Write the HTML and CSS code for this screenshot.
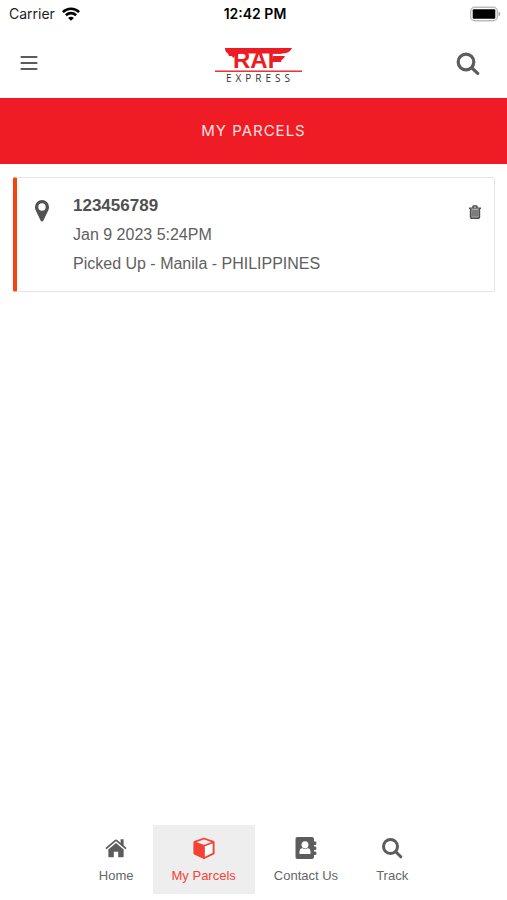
FILE: index.html
```html
<!DOCTYPE html>
<html lang="en">
<head>
<meta charset="utf-8">
<meta name="viewport" content="width=device-width, initial-scale=1">
<title>My Parcels - RAF Express</title>
<link rel="stylesheet" href="styles.css">
</head>
<body>
<div class="status">
  <div class="carrier">
    <span>Carrier</span>
    <svg width="18" height="14" viewBox="0 0 18 14" fill="none" stroke="#000" stroke-width="2.6" aria-hidden="true"><path d="M.9 5.1C5.4.6 12.600.6 17.100 5.100M3.900 8.200c2.900-2.800 7.300-2.800 10.200 0"/><path d="M9 13.800 6.100 10.900c1.600-1.500 4.200-1.500 5.800 0z" fill="#000" stroke="none"/></svg>
  </div>
  <span class="time">12:42 PM</span>
  <svg class="battery" width="31" height="16" viewBox="0 0 31 16" aria-hidden="true"><rect x=".7" y="1.200" width="26.600" height="13.600" rx="4" fill="#fff" stroke="#bdbdbd" stroke-width="1.400"/><rect x="2.700" y="3.300" width="22.600" height="9.400" rx="1" fill="#000"/><path d="M28.500 5.500c2.300.8 2.300 4.200 0 5z" fill="#aaa"/></svg>
</div>
<header class="topbar">
  <button class="icon-button" aria-label="Menu">
    <svg width="18" height="18" viewBox="0 0 18 18" stroke="#5c5c5e" stroke-width="2.200" stroke-linecap="round" aria-hidden="true"><path d="M1.500 3h15M1.500 9h15M1.500 15h15"/></svg>
  </button>
  <svg class="logo" width="87" height="38" viewBox="0 0 87 38" role="img" aria-label="RAF Express">
    <g fill="#ed1c24">
      <path d="M10 2H77C75 6.500 71 7.500 66 7.500H24L22 10H20L18 12L17 10L14 10L13 7.500Q10 6 10 2Z"/>
      <path d="M58 10H70C68 14.500 64 15.500 57 15.500Z"/>
      <text class="logo-mark" x="18" y="22">RAF</text>
      <rect y="24.500" width="87" height="1.400"/>
    </g>
    <text class="logo-sub" x="11" y="36">EXPRESS</text>
  </svg>
  <button class="icon-button" aria-label="Search">
    <svg width="24" height="24" viewBox="0 0 24 24" fill="none" stroke="#5c5c5e" stroke-width="3.200" stroke-linecap="round" aria-hidden="true"><circle cx="10" cy="11" r="7.800"/><path d="m16 17 5.700 5.300"/></svg>
  </button>
</header>
<h1 class="title">MY PARCELS</h1>
<main>
  <article class="parcel">
    <svg class="pin" width="14" height="22" viewBox="0 0 14 22" fill="#525252" fill-rule="evenodd" aria-hidden="true"><path d="M7 0a7 7 0 0 1 7 7c0 1.500-.3 2.500-.9 3.700L8.300 20.700c-.5 1-2.100 1-2.600 0L.9 10.700C.3 9.500 0 8.500 0 7a7 7 0 0 1 7-7zM7 3.300a3.700 3.700 0 1 0 0 7.400 3.700 3.700 0 0 0 0-7.400z"/></svg>
    <div class="details">
      <h2>123456789</h2>
      <p>Jan 9 2023 5:24PM</p>
      <p>Picked Up - Manila - PHILIPPINES</p>
    </div>
    <button class="delete" aria-label="Delete parcel">
      <svg width="12" height="14" viewBox="0 0 12 14" fill="none" stroke="#505050" stroke-width="1.600" aria-hidden="true"><path d="M0 3.200h12M3.700 3 4.400 1h3.200l.7 2"/><path d="M1.600 3.500v8.600q0 1.200 1.200 1.200h6.400q1.200 0 1.200-1.200V3.500" fill="#aaa"/><path d="M4 5v6.500M6 5v6.500M8 5v6.500" stroke-width="1"/></svg>
    </button>
  </article>
</main>
<nav class="tabs">
  <a href="#home">
    <svg width="22" height="24" viewBox="0 0 20 22" fill="#5c5c5c" aria-hidden="true"><path d="M10 6.500 17 12.300V18.800q0 .7-.7.700H12v-5H8v5H3.700q-.7 0-.7-.7v-6.500z"/><path d="m.8 11.600 8.300-7.200q.9-.8 1.800 0l8.300 7.200" fill="none" stroke="#5c5c5c" stroke-width="1.600"/><path d="M14.200 3H17v6.500l-2.800-2.500z"/></svg>
    <span>Home</span>
  </a>
  <a href="#parcels" class="active" aria-current="page">
    <svg width="22" height="24" viewBox="0 0 22 24" fill="none" stroke="#f44336" stroke-width="1.700" stroke-linejoin="round" aria-hidden="true"><path d="m11 2.500 9.500 3.400V17.500L11 21.900 1.500 17.500V5.900z" fill="#eee"/><path d="m1.500 6.300 9.500 3.500v12.100L1.500 17.500z" fill="#f44336"/><path d="m11 9.800 9.500-3.500v11.200L11 21.900z" fill="#fff"/></svg>
    <span>My Parcels</span>
  </a>
  <a href="#contact">
    <svg width="22" height="24" viewBox="0 0 22 24" aria-hidden="true"><path d="M2.500 1H17q2 0 2 2v2.500h1.500q.8 0 .8.700v2q0 .8-.8.800H19v1.500h1.500q.8 0 .8.700v2q0 .8-.8.800H19v1.500h1.500q.8 0 .8.700v2q0 .8-.8.800H19V21q0 2-2 2H2.500q-2 0-2-2V3q0-2 2-2z" fill="#5c5c5c"/><circle cx="10" cy="8.700" r="3.500" fill="#fff"/><path d="M4.500 18v-2.500c0-2 1.300-3.200 3-3.200q2.500 1 5 0c1.700 0 3 1.200 3 3.200V18z" fill="#fff"/></svg>
    <span>Contact Us</span>
  </a>
  <a href="#track">
    <svg width="22" height="24" viewBox="0 0 22 24" fill="none" stroke="#5c5c5c" stroke-width="3" stroke-linecap="round" aria-hidden="true"><circle cx="9.500" cy="10.500" r="7"/><path d="m15 16 4.800 4.800"/></svg>
    <span>Track</span>
  </a>
</nav>
</body>
</html>
```
FILE: styles.css
```css
* {
  box-sizing: border-box;
}

body {
  margin: 0;
  min-height: 100vh;
  display: flex;
  flex-direction: column;
  background: #fff;
  color: #606060;
  font-family: "Liberation Sans", Arial, sans-serif;
}

button {
  padding: 0;
  border: 0;
  background: none;
  cursor: pointer;
}

svg {
  display: block;
}

.status {
  display: grid;
  grid-template-columns: 1fr auto 1fr;
  align-items: center;
  height: 27px;
  padding: 0 6px 0 9px;
  color: #222;
  font: 14px/20px Inter, sans-serif;
}

.carrier {
  display: flex;
  align-items: center;
  gap: 7px;
}

.time {
  font-weight: 600;
  color: #000;
}

.battery {
  justify-self: end;
}

.topbar {
  display: grid;
  grid-template-columns: 1fr auto 1fr;
  align-items: center;
  height: 71px;
  padding: 0 27px 0 17px;
}

.icon-button {
  display: flex;
  align-items: center;
  justify-content: center;
  width: 24px;
  height: 24px;
}

.icon-button:last-child {
  justify-self: end;
}

.logo {
  margin: 4px 0 0 20px;
}

.logo-mark {
  font: bold 24px "Liberation Sans", sans-serif;
}

.logo-sub {
  fill: #333;
  font: 10px "Open Sans", sans-serif;
  letter-spacing: 4px;
}

.title {
  margin: 0;
  padding: 23px 16px;
  background: #ef1c26;
  color: #ffe3e0;
  font: 15px/20px Inter, sans-serif;
  letter-spacing: 1px;
  text-align: center;
}

main {
  flex: 1;
  padding: 13px 12px 13px 13px;
}

.parcel {
  display: flex;
  align-items: flex-start;
  padding: 13px 13px 13px 18px;
  border: 1px solid #e6e6e6;
  border-left: 4px solid #f4430f;
  border-radius: 2px;
}

.pin {
  margin-top: 9px;
}

.details {
  flex: 1;
  margin-left: 24px;
}

.details h2,
.details p {
  margin: 0;
  font-size: 16px;
  line-height: 29px;
}

.details h2 {
  color: #505050;
  font-size: 17px;
}

.delete {
  margin-top: 14px;
}

.tabs {
  display: flex;
  justify-content: center;
  margin-bottom: 6px;
}

.tabs a {
  display: flex;
  flex-direction: column;
  align-items: center;
  gap: 8px;
  padding: 11px 19px 10px;
  color: #666;
  font-size: 13px;
  line-height: 16px;
  text-decoration: none;
}

.tabs .active {
  background: #eee;
  color: #f44336;
}
```
